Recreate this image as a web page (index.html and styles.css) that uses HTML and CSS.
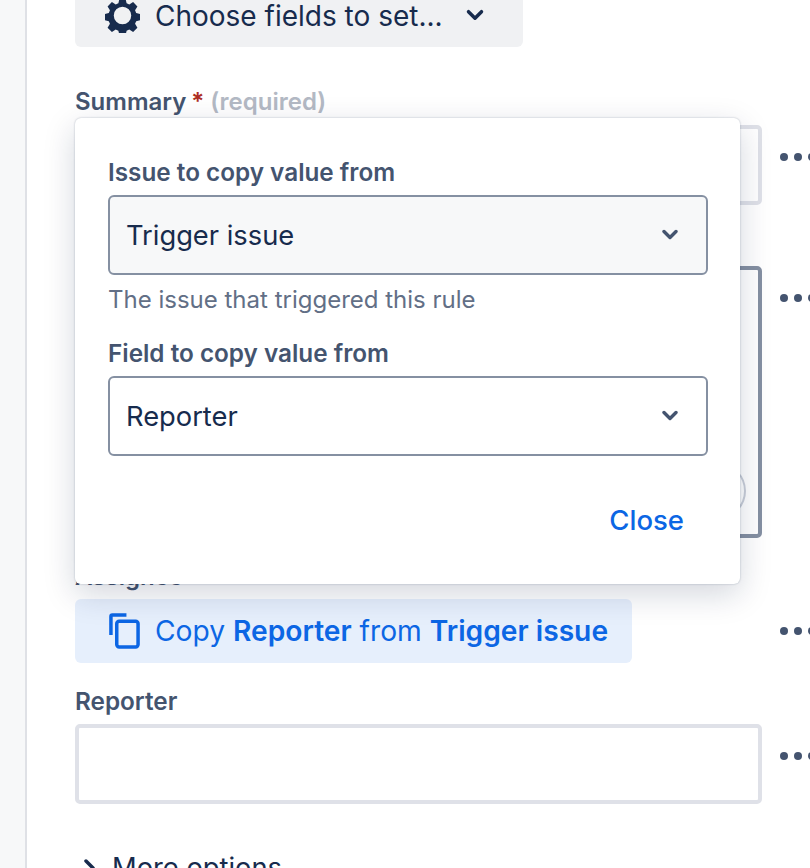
FILE: index.html
```html
<!DOCTYPE html>
<html lang="en">
<head>
<meta charset="utf-8">
<title>Edit issue</title>
<link rel="stylesheet" href="styles.css">
</head>
<body>
<div class="page">
  <aside class="rail"></aside>
  <main class="main">
    <button class="fields-btn">
      <svg class="gear" viewBox="0 0 34 34" width="35" height="35"><path fill="#172b4d" fill-rule="evenodd" d="M14 1h6l1 4.200 2.600 1.100 3.700-2.300 4.200 4.200-2.300 3.700 1.100 2.600 4 1v6l-4 1-1.100 2.600 2.300 3.700-4.200 4.200-3.700-2.300-2.600 1.100-1 4.200h-6l-1-4.200-2.600-1.100-3.700 2.300-4.200-4.200 2.300-3.700-1.100-2.600-4-1v-6l4-1 1.100-2.600-2.300-3.700 4.200-4.200 3.700 2.300 2.600-1.100zM17 8.500a8.500 8.500 0 1 0 0 17 8.500 8.500 0 0 0 0-17z"/></svg>
      <span class="fields-text">Choose fields to set...</span>
      <svg class="chev" viewBox="0 0 16 12" width="18" height="13"><path d="M2 2.500l6 6 6-6" fill="none" stroke="#172b4d" stroke-width="3.200" stroke-linecap="round" stroke-linejoin="round"/></svg>
    </button>

    <div class="label label-summary">Summary<span class="req">*</span> <span class="hint">(required)</span></div>
    <div class="row row-summary">
      <div class="box box-short"></div>
      <span class="dots"><i></i><i></i><i></i></span>
    </div>

    <div class="row row-desc">
      <div class="box box-desc"><span class="round"></span></div>
      <span class="dots"><i></i><i></i><i></i></span>
    </div>

    <div class="label label-assignee">Assignee</div>
    <div class="row row-tag">
      <div class="tag">
        <svg class="copy" viewBox="0 0 32 36" width="31" height="36"><path d="M2 22V3a1.500 1.500 0 0 1 1.500-1.500H18" fill="none" stroke="#0c66e4" stroke-width="3.600"/><rect x="8" y="8" width="22" height="26.500" rx="2.500" fill="none" stroke="#0c66e4" stroke-width="3.600"/></svg>
        <span>Copy <b>Reporter</b> from <b>Trigger issue</b></span>
      </div>
      <span class="dots dots-tag"><i></i><i></i><i></i></span>
    </div>

    <div class="label label-reporter">Reporter</div>
    <div class="row row-reporter">
      <div class="box box-short"></div>
      <span class="dots"><i></i><i></i><i></i></span>
    </div>

    <div class="more">
      <svg viewBox="0 0 14 20" width="14" height="20"><path d="M3 3l7 7-7 7" fill="none" stroke="#172b4d" stroke-width="3.500" stroke-linecap="round" stroke-linejoin="round"/></svg>
      <span>More options</span>
    </div>
  </main>

  <section class="popup">
    <div class="pop-label">Issue to copy value from</div>
    <div class="select select-filled">
      <span>Trigger issue</span>
      <svg viewBox="0 0 16 12" width="16" height="12"><path d="M2 2.500l6 6 6-6" fill="none" stroke="#44546f" stroke-width="3.400" stroke-linecap="round" stroke-linejoin="round"/></svg>
    </div>
    <div class="pop-help">The issue that triggered this rule</div>
    <div class="pop-label pop-label-2">Field to copy value from</div>
    <div class="select">
      <span>Reporter</span>
      <svg viewBox="0 0 16 12" width="16" height="12"><path d="M2 2.500l6 6 6-6" fill="none" stroke="#44546f" stroke-width="3.400" stroke-linecap="round" stroke-linejoin="round"/></svg>
    </div>
    <div class="pop-foot"><span class="close">Close</span></div>
  </section>
</div>
</body>
</html>
```
FILE: styles.css
```css
* { box-sizing: border-box; }
html, body { margin: 0; padding: 0; height: 868px; overflow: hidden; background: #fff; }
body { font-family: Inter, "Noto Sans", sans-serif; color: #172b4d; }
.page { position: relative; display: flex; width: 810px; height: 868px; overflow: hidden; }
.rail { flex: 0 0 27px; background: #f7f8f9; border-right: 2px solid #dfe1e6; }
.main { flex: 1; padding-left: 48px; min-width: 0; display: flex; flex-direction: column; align-items: flex-start; }

.fields-btn { display: flex; align-items: center; width: 448px; height: 64px; margin-top: -17px; padding: 0 0 0 30px; border: 0; border-radius: 6px; background: #f0f1f3; font: inherit; font-size: 28px; color: #172b4d; flex: none; }
.gear { flex: none; }
.fields-text { margin-left: 15px; white-space: nowrap; position: relative; top: 1px; }
.chev { margin-left: 23px; flex: none; }

.label { font-size: 24px; font-weight: 600; color: #44546f; line-height: 28px; white-space: nowrap; }
.label-summary { margin-top: 41px; }
.req { color: #ae2e24; margin-left: 5px; }
.hint { color: #b3b9c4; margin-left: 0; }
.label-assignee { margin-top: 25px; }
.label-reporter { margin-top: 24px; font-size: 24.300px; }

.row { display: flex; align-items: flex-start; flex: none; width: 735px; }
.row-summary { margin-top: 9px; }
.row-reporter { margin-top: 9px; }
.row-desc { margin-top: 61px; }
.row-tag { margin-top: 8px; }
.box { width: 687px; height: 80px; border: 4px solid #dfe1e8; border-radius: 5px; background: #fff; flex: none; position: relative; }
.box-desc { height: 272px; border-color: #8590a2; }
.round { position: absolute; right: 12px; top: 193px; width: 56px; height: 56px; border: 2px solid #c9ced8; border-radius: 50%; }
.row .box + .dots { margin-top: 28px; }
.dots { display: flex; gap: 6px; margin-left: 18px; }
.dots i { width: 8px; height: 8px; border-radius: 50%; background: #44546f; flex: none; }
.dots-tag { margin-left: 148px; margin-top: 28px; }

.tag { display: flex; align-items: center; width: 557px; height: 64px; padding-left: 34px; flex: none; background: #e6effc; border-radius: 6px; color: #0c66e4; font-size: 28.200px; white-space: nowrap; }
.tag b { font-weight: 600; }
.copy { flex: none; margin-right: 15px; }

.more { display: flex; align-items: center; gap: 15px; margin-top: 48px; margin-left: 8px; font-size: 27.300px; line-height: 32px; flex: none; }

.popup { position: absolute; left: 75px; top: 118px; width: 665px; height: 466px; padding: 39px 32px 0 33px; background: #fff; border-radius: 6px; box-shadow: 0 0 2px rgba(9,30,66,.3), 0 10px 32px rgba(9,30,66,.18); }
.pop-label { font-size: 24.300px; font-weight: 600; color: #44546f; line-height: 30px; white-space: nowrap; }
.pop-label-2 { margin-top: 23px; }
.select { display: flex; align-items: center; justify-content: space-between; height: 80px; margin-top: 8px; padding: 0 28px 0 16px; border: 2px solid #8590a2; border-radius: 6px; font-size: 27.300px; background: #fff; color: #172b4d; }
.select-filled { background: #f7f8f9; }
.pop-help { margin-top: 10px; font-size: 24px; line-height: 30px; color: #626f86; white-space: nowrap; }
.pop-foot { display: flex; justify-content: flex-end; margin-top: 48px; padding-right: 24px; }
.close { color: #0c66e4; font-size: 27.500px; font-weight: 500; line-height: 32px; }
```
